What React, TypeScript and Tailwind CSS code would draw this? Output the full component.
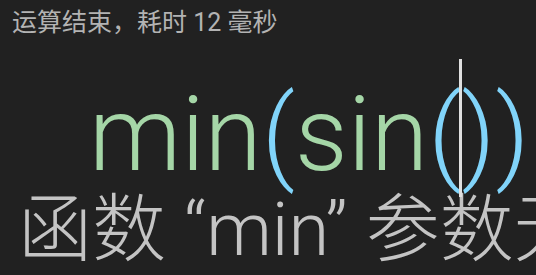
export default function App() {
  return (
    <div className="h-[275px] w-[536px] overflow-hidden bg-[#212121] font-['Roboto','Noto_Sans_CJK_SC',sans-serif]">
      <div className="pl-3 pt-[7px] text-[25px] leading-[32px] text-[#b3b3b3] whitespace-nowrap">
        运算结束，耗时 12 毫秒
      </div>
      <div className="mt-[27px] flex items-center pl-[89px] text-[104px] font-light leading-[138px] whitespace-nowrap">
        <span className="text-[#a5d6a7]">min</span>
        <span className="text-[#81d4fa]">(</span>
        <span className="text-[#a5d6a7]">sin</span>
        <span className="text-[#81d4fa]">(</span>
        <span className="relative inline-block h-[138px] w-0">
          <span className="absolute left-[-2px] top-[-7px] h-full w-[3px] bg-[#e0e0e0]" />
        </span>
        <span className="text-[#81d4fa]">)</span>
        <span className="text-[#81d4fa]">)</span>
      </div>
      <div className="-mt-[14px] pl-[18px] text-[74px] font-light leading-[80px] text-[#c4c4c4] whitespace-nowrap">
        函数 “min” 参数无效
      </div>
    </div>
  );
}
